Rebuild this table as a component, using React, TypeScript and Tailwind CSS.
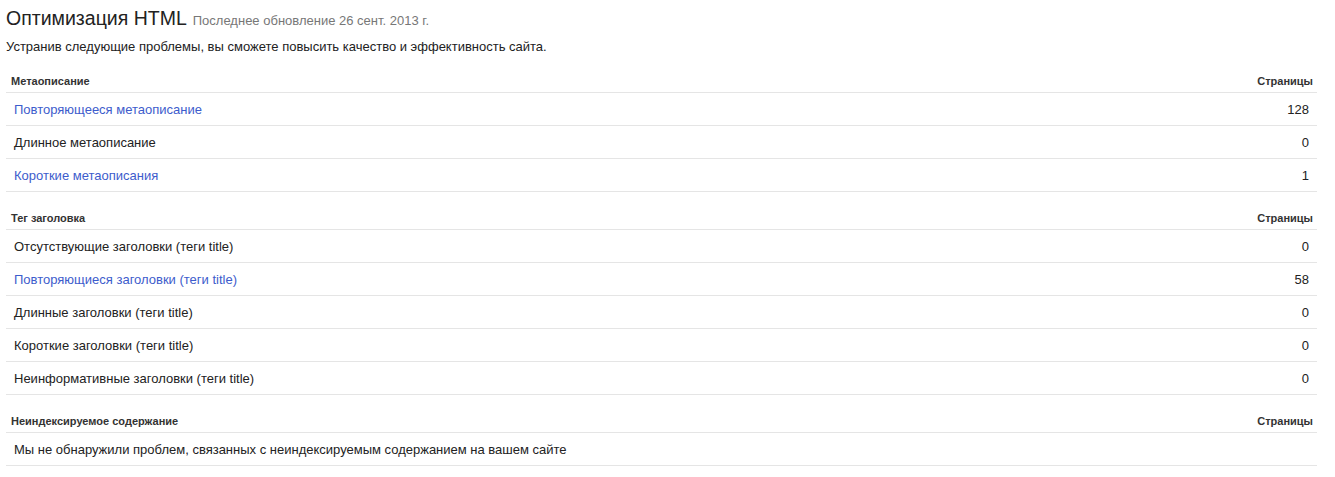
import React from 'react';

type Row = { label: string; count?: number; link?: boolean };
type Section = { title: string; rows: Row[] };

const sections: Section[] = [
  {
    title: 'Метаописание',
    rows: [
      { label: 'Повторяющееся метаописание', count: 128, link: true },
      { label: 'Длинное метаописание', count: 0 },
      { label: 'Короткие метаописания', count: 1, link: true },
    ],
  },
  {
    title: 'Тег заголовка',
    rows: [
      { label: 'Отсутствующие заголовки (теги title)', count: 0 },
      { label: 'Повторяющиеся заголовки (теги title)', count: 58, link: true },
      { label: 'Длинные заголовки (теги title)', count: 0 },
      { label: 'Короткие заголовки (теги title)', count: 0 },
      { label: 'Неинформативные заголовки (теги title)', count: 0 },
    ],
  },
  {
    title: 'Неиндексируемое содержание',
    rows: [{ label: 'Мы не обнаружили проблем, связанных с неиндексируемым содержанием на вашем сайте' }],
  },
];

const App: React.FC = () => {
  return (
    <div className="min-h-screen w-full bg-white text-[#222] font-['Liberation_Sans',Arial,sans-serif] pl-[6px] pr-[18px]">
      {/* Title */}
      <div className="flex items-baseline gap-[6px] pt-[6px] h-[30px]">
        <h1 className="text-[19.5px] leading-[24px] text-[#222]">Оптимизация HTML</h1>
        <span className="text-[13px] text-[#777]">Последнее обновление 26 сент. 2013 г.</span>
      </div>
      <p className="text-[13px] leading-[16px] mt-[9px] text-[#222]">
        Устранив следующие проблемы, вы сможете повысить качество и эффективность сайта.
      </p>

      <div className="mt-[11px]">
        {sections.map((section, i) => (
          <div key={section.title} className={i > 0 ? 'mt-[11px]' : ''}>
            <div className="flex justify-between items-center h-[27px] border-b border-[#e5e5e5] pl-[5px] pr-[4px] pt-[4px] text-[11px] font-bold text-[#333]">
              <span>{section.title}</span>
              <span>Страницы</span>
            </div>
            {section.rows.map((row) => (
              <div
                key={row.label}
                className="flex justify-between items-center h-[33px] border-b border-[#e5e5e5] pl-[8px] pr-[8px] pt-[2px] text-[13px]"
              >
                <span className={row.link ? 'text-[#3d5ccc]' : 'text-[#222]'}>{row.label}</span>
                {row.count !== undefined && <span className="text-[#222]">{row.count}</span>}
              </div>
            ))}
          </div>
        ))}
      </div>
    </div>
  );
};

export default App;
